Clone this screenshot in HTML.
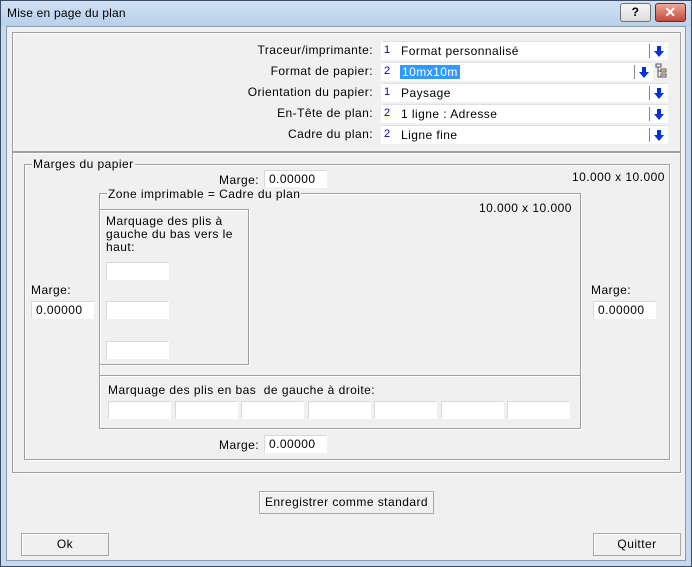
<!DOCTYPE html><html><head><meta charset="utf-8"><style>
*{box-sizing:border-box}
body{margin:0;width:692px;height:567px;overflow:hidden;font-family:"Liberation Sans",sans-serif;font-size:12px;letter-spacing:0.45px;color:#000;background:#f0f0f0;position:relative}
.a{position:absolute}
.win{left:0;top:0;width:692px;height:567px;border:1px solid #3c4d63;background:#c7d9ee}
.title{left:1px;top:1px;width:690px;height:25px;background:linear-gradient(#cfe0f3,#b9d0ea)}
.client{left:6px;top:26px;width:680px;height:535px;background:#f0f0f0;border:1px solid #8a9bb0}
.grp{border:1px solid #a0a0a0;box-shadow:1px 1px 0 #fff inset,1px 1px 0 #fff}
.lbl{white-space:nowrap}
.r{text-align:right}
.in{background:#fff;border:1px solid #fff;border-top-color:#d8d8d8;border-left-color:#d8d8d8;height:18px;padding:1px 4px}
.cb{background:#fff;height:19px;border:1px solid #fff;border-top-color:#e0e0e0}
.cb .n{position:absolute;left:2px;top:2px;color:#00c;font-size:11px}
.cb .t{position:absolute;left:19px;top:2px;white-space:nowrap}
.cb .s{position:absolute;right:17px;top:2px;width:1px;height:14px;background:#888}
.cb .ar{position:absolute;right:3px;top:4px;width:10px;height:11px}
.btn{background:#f0f0f0;border:1px solid #a8a8a8;box-shadow:inset 1px 1px 0 #fff;text-align:center;line-height:20px}
.gl{background:#f0f0f0;padding:0 1px}
</style></head><body>
<div class="a win"></div>
<div class="a title"></div>
<div class="a" style="left:7px;top:6px;letter-spacing:0.2px">Mise en page du plan</div>
<div class="a" style="left:620px;top:3px;width:31px;height:19px;border:1px solid #707070;border-radius:3px;background:linear-gradient(#f6f6f6,#dcdcdc);text-align:center;font-weight:bold;line-height:17px">?</div>
<div class="a" style="left:655px;top:3px;width:31px;height:19px;border:1px solid #6b2a22;border-radius:3px;background:linear-gradient(#e9a99a,#c2493a);text-align:center;font-weight:bold;color:#fff;line-height:17px;font-size:14px">✕</div>
<div class="a client"></div>

<div class="a grp" style="left:12px;top:32px;width:669px;height:120px"></div>
<div class="a lbl r" style="left:200px;width:173px;top:43px">Traceur/imprimante:</div>
<div class="a lbl r" style="left:200px;width:173px;top:64px">Format de papier:</div>
<div class="a lbl r" style="left:200px;width:173px;top:85px">Orientation du papier:</div>
<div class="a lbl r" style="left:200px;width:173px;top:106px">En-Tête de plan:</div>
<div class="a lbl r" style="left:200px;width:173px;top:127px">Cadre du plan:</div>

<div class="a cb" style="left:381px;top:41px;width:287px"><span class="n">1</span><span class="t">Format personnalisé</span><span class="s"></span><svg class="ar" viewBox="0 0 10 11"><path d="M3 0h4v5h3L5 11 0 5h3z" fill="#0033dd"/></svg></div>
<div class="a cb" style="left:381px;top:62px;width:272px"><span class="n">2</span><span class="t" style="background:#3399ff;color:#fff;padding:0 2px;left:18px">10mx10m</span><span class="s"></span><svg class="ar" viewBox="0 0 10 11"><path d="M3 0h4v5h3L5 11 0 5h3z" fill="#0033dd"/></svg></div>
<svg class="a" style="left:654px;top:63px" width="14" height="16" viewBox="0 0 14 16"><path d="M2 1h5v3H2zM4 4v10h3M4 8h3M7 6h5v3H7zM7 11h5v3H7z" fill="none" stroke="#556" stroke-width="1"/><rect x="8" y="7" width="3" height="1" fill="#e8b000"/><rect x="8" y="12" width="3" height="1" fill="#e8b000"/></svg>
<div class="a cb" style="left:381px;top:83px;width:287px"><span class="n">1</span><span class="t">Paysage</span><span class="s"></span><svg class="ar" viewBox="0 0 10 11"><path d="M3 0h4v5h3L5 11 0 5h3z" fill="#0033dd"/></svg></div>
<div class="a cb" style="left:381px;top:104px;width:287px"><span class="n">2</span><span class="t">1 ligne : Adresse</span><span class="s"></span><svg class="ar" viewBox="0 0 10 11"><path d="M3 0h4v5h3L5 11 0 5h3z" fill="#0033dd"/></svg></div>
<div class="a cb" style="left:381px;top:125px;width:287px"><span class="n">2</span><span class="t">Ligne fine</span><span class="s"></span><svg class="ar" viewBox="0 0 10 11"><path d="M3 0h4v5h3L5 11 0 5h3z" fill="#0033dd"/></svg></div>

<div class="a grp" style="left:12px;top:152px;width:669px;height:321px"></div>
<div class="a grp" style="left:24px;top:164px;width:646px;height:296px"></div>
<div class="a lbl gl" style="left:32px;top:157px">Marges du papier</div>
<div class="a lbl" style="left:219px;top:173px">Marge:</div>
<div class="a in" style="left:264px;top:170px;width:63px">0.00000</div>
<div class="a lbl" style="left:572px;top:170px">10.000 x 10.000</div>

<div class="a grp" style="left:99px;top:193px;width:482px;height:236px"></div>
<div class="a lbl gl" style="left:107px;top:187px">Zone imprimable = Cadre du plan</div>
<div class="a lbl" style="left:479px;top:201px">10.000 x 10.000</div>
<div class="a grp" style="left:99px;top:209px;width:150px;height:156px"></div>
<div class="a" style="left:106px;top:215px;line-height:13px;white-space:nowrap">Marquage des plis à<br>gauche du bas vers le<br>haut:</div>
<div class="a in" style="left:106px;top:262px;width:63px"></div>
<div class="a in" style="left:106px;top:301px;width:63px"></div>
<div class="a in" style="left:106px;top:341px;width:63px"></div>
<div class="a grp" style="left:99px;top:375px;width:482px;height:54px"></div>
<div class="a lbl" style="left:108px;top:383px">Marquage des plis en bas&nbsp; de gauche à droite:</div>
<div class="a in" style="left:108px;top:401px;width:63px"></div>
<div class="a in" style="left:175px;top:401px;width:63px"></div>
<div class="a in" style="left:241px;top:401px;width:63px"></div>
<div class="a in" style="left:308px;top:401px;width:63px"></div>
<div class="a in" style="left:374px;top:401px;width:63px"></div>
<div class="a in" style="left:441px;top:401px;width:63px"></div>
<div class="a in" style="left:507px;top:401px;width:63px"></div>

<div class="a lbl" style="left:31px;top:283px">Marge:</div>
<div class="a in" style="left:31px;top:301px;width:63px">0.00000</div>
<div class="a lbl" style="left:591px;top:283px">Marge:</div>
<div class="a in" style="left:593px;top:301px;width:63px">0.00000</div>
<div class="a lbl" style="left:219px;top:438px">Marge:</div>
<div class="a in" style="left:264px;top:435px;width:63px">0.00000</div>

<div class="a btn" style="left:259px;top:491px;width:175px;height:23px">Enregistrer comme standard</div>
<div class="a btn" style="left:21px;top:533px;width:88px;height:23px">Ok</div>
<div class="a btn" style="left:593px;top:533px;width:88px;height:23px">Quitter</div>
</body></html>
